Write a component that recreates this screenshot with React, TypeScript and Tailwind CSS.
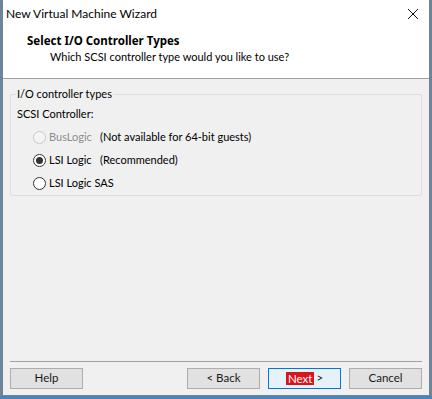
import React from "react";

function Radio({ checked, disabled }: { checked?: boolean; disabled?: boolean }) {
  return (
    <span
      className={`flex h-[13px] w-[13px] shrink-0 items-center justify-center rounded-full border ${
        disabled ? "border-[#c8c8c8] bg-[#f4f4f4]" : "border-[#333333] bg-white"
      }`}
    >
      {checked && <span className="h-[7px] w-[7px] rounded-full bg-[#333333]" />}
    </span>
  );
}

function Btn({ children, focused }: { children: React.ReactNode; focused?: boolean }) {
  return (
    <div
      className={`flex h-[21px] w-[73px] items-center justify-center border text-[11.5px] text-[#1a1a1a] ${
        focused ? "border-[#0078d7] bg-[#e5f1fb]" : "border-[#adadad] bg-[#e1e1e1]"
      }`}
    >
      {children}
    </div>
  );
}

export default function App() {
  return (
    <div className="flex h-[399px] w-[432px] flex-col overflow-hidden bg-[#4a86bd] font-['Lato','Noto_Sans',sans-serif]">
      <div className="flex h-[396px] flex-col border-b border-l-[3px] border-r-[3px] border-[#6f8499] bg-[#f0f0f0]">
        {/* title + header white */}
        <div className="flex h-[79px] flex-col border-b border-[#a0a0a0] bg-white">
          <div className="flex h-[28px] items-center justify-between pl-[3px] pr-[10px]">
            <span className="text-[12px] text-[#000]">New Virtual Machine Wizard</span>
            <svg width="12" height="12" viewBox="0 0 12 12">
              <path d="M1 1 L11 11 M11 1 L1 11" stroke="#111" strokeWidth="1" />
            </svg>
          </div>
          <div className="pl-[24px] pt-[5px] font-['Noto_Sans',sans-serif] text-[11.5px] font-bold leading-[16px] text-[#000]">
            Select I/O Controller Types
          </div>
          <div className="pl-[47px] text-[11px] leading-[16px] text-[#000]">
            Which SCSI controller type would you like to use?
          </div>
        </div>
        {/* body */}
        <div className="flex flex-1 flex-col px-[7px] pt-[8px] text-[11px]">
          <div className="relative mt-[7px] h-[102px] rounded-[2px] border border-[#dcdcdc]">
            <span className="absolute left-[5px] top-[-9px] bg-[#f0f0f0] px-[1px] leading-[16px] text-[#000]">
              I/O controller types
            </span>
            <div className="flex flex-col pl-[6px] pt-[11px]">
              <span className="leading-[16px] text-[#000]">SCSI Controller:</span>
              <div className="mt-[7px] flex flex-col gap-[7px] pl-[16px]">
                <div className="flex h-[16px] items-center">
                  <Radio disabled />
                  <span className="ml-[3px] w-[51px] text-[#8d8d8d]">BusLogic</span>
                  <span className="text-[#000]">(Not available for 64-bit guests)</span>
                </div>
                <div className="flex h-[16px] items-center">
                  <Radio checked />
                  <span className="ml-[3px] w-[51px] text-[#000]">LSI Logic</span>
                  <span className="text-[#000]">(Recommended)</span>
                </div>
                <div className="flex h-[16px] items-center">
                  <Radio />
                  <span className="ml-[3px] text-[#000]">LSI Logic SAS</span>
                </div>
              </div>
            </div>
          </div>
          <div className="flex-1" />
          <div className="border-t border-[#a0a0a0]" />
          <div className="flex h-[33px] items-center pb-[1px]">
            <Btn>Help</Btn>
            <div className="flex-1" />
            <div className="flex gap-[8px]">
              <Btn>&lt; Back</Btn>
              <Btn focused>
                <span className="bg-[#d9141c] px-[2px] leading-[13px] text-white">Next</span>
                <span className="ml-[2px]">&gt;</span>
              </Btn>
              <Btn>Cancel</Btn>
            </div>
          </div>
        </div>
      </div>
    </div>
  );
}
